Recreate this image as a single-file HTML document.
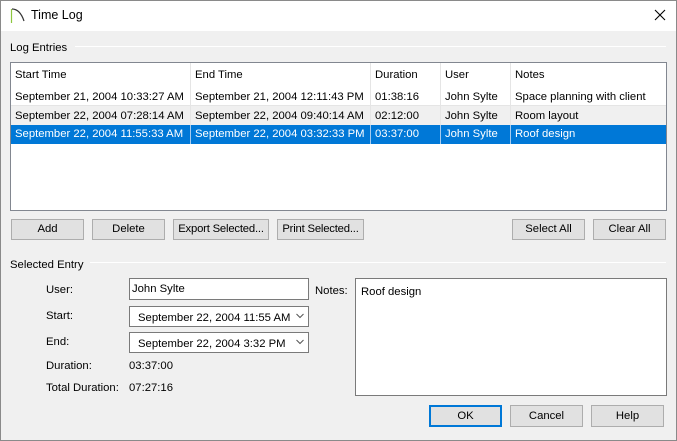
<!DOCTYPE html>
<html><head><style>
*{box-sizing:border-box;margin:0;padding:0}
body{width:677px;height:441px;position:relative;overflow:hidden;background:#f0f0f0;font-family:"Liberation Sans",sans-serif;font-size:11.3px;color:#000}
.a{position:absolute;white-space:nowrap}
.btn{position:absolute;height:21px;background:#e1e1e1;border:1px solid #adadad;text-align:center;line-height:19px;white-space:nowrap;overflow:hidden}
.line{position:absolute;height:1px;background:#a0a0a0;border-bottom:1px solid #fff}
.cell{position:absolute;height:18px;line-height:18px;padding-left:4px;white-space:nowrap}
.box{position:absolute;background:#fff;border:1px solid #7a7a7a;white-space:nowrap}
</style></head><body>
<div class="a" style="left:0;top:0;width:677px;height:441px;border:1px solid #8a8a8a"></div>
<div class="a" style="left:1px;top:1px;width:675px;height:30px;background:#fff"></div>
<svg class="a" style="left:10px;top:7px" width="18" height="18"><path d="M1.5 2 V16" stroke="#8dc63f" stroke-width="1.2"/><path d="M2 2 Q10 2 14 14" stroke="#333" fill="none" stroke-width="1.2"/></svg>
<div class="a" style="left:31px;top:8px;font-size:12.5px">Time Log</div>
<svg class="a" style="left:654px;top:9px" width="12" height="12"><path d="M1 1L11 11M11 1L1 11" stroke="#000" stroke-width="1.1"/></svg>

<div class="a" style="left:10px;top:42px">Log Entries</div>
<div class="line" style="left:75px;top:46px;width:591px"></div>
<div class="box" style="left:10px;top:62px;width:657px;height:149px;border-color:#828790">
 <div class="a" style="left:179px;top:0;width:1px;height:81px;background:#e5e5e5"></div>
 <div class="a" style="left:359px;top:0;width:1px;height:81px;background:#e5e5e5"></div>
 <div class="a" style="left:429px;top:0;width:1px;height:81px;background:#e5e5e5"></div>
 <div class="a" style="left:499px;top:0;width:1px;height:81px;background:#e5e5e5"></div>
 <div class="cell" style="left:0;top:3px">Start Time</div>
 <div class="cell" style="left:180px;top:3px">End Time</div>
 <div class="cell" style="left:360px;top:3px">Duration</div>
 <div class="cell" style="left:430px;top:3px">User</div>
 <div class="cell" style="left:500px;top:3px">Notes</div>
 <div class="a" style="left:0;top:25px;width:655px;height:18px;border-bottom:1px solid #e5e5e5"></div>
 <div class="cell" style="left:0;top:25px">September 21, 2004 10:33:27 AM</div>
 <div class="cell" style="left:180px;top:25px">September 21, 2004 12:11:43 PM</div>
 <div class="cell" style="left:360px;top:25px">01:38:16</div>
 <div class="cell" style="left:430px;top:25px">John Sylte</div>
 <div class="cell" style="left:500px;top:25px">Space planning with client</div>
 <div class="a" style="left:0;top:43px;width:655px;height:19px;background:#f0f0f0"></div>
 <div class="a" style="left:179px;top:43px;width:1px;height:19px;background:#e5e5e5"></div>
 <div class="a" style="left:359px;top:43px;width:1px;height:19px;background:#e5e5e5"></div>
 <div class="a" style="left:429px;top:43px;width:1px;height:19px;background:#e5e5e5"></div>
 <div class="a" style="left:499px;top:43px;width:1px;height:19px;background:#e5e5e5"></div>
 <div class="cell" style="left:0;top:44px">September 22, 2004 07:28:14 AM</div>
 <div class="cell" style="left:180px;top:44px">September 22, 2004 09:40:14 AM</div>
 <div class="cell" style="left:360px;top:44px">02:12:00</div>
 <div class="cell" style="left:430px;top:44px">John Sylte</div>
 <div class="cell" style="left:500px;top:44px">Room layout</div>
 <div class="a" style="left:0;top:62px;width:655px;height:19px;background:#0078d7"></div>
 <div class="a" style="left:179px;top:62px;width:1px;height:19px;background:#a6cbef"></div>
 <div class="a" style="left:359px;top:62px;width:1px;height:19px;background:#a6cbef"></div>
 <div class="a" style="left:429px;top:62px;width:1px;height:19px;background:#a6cbef"></div>
 <div class="a" style="left:499px;top:62px;width:1px;height:19px;background:#a6cbef"></div>
 <div class="cell" style="left:0;top:62px;color:#fff">September 22, 2004 11:55:33 AM</div>
 <div class="cell" style="left:180px;top:62px;color:#fff">September 22, 2004 03:32:33 PM</div>
 <div class="cell" style="left:360px;top:62px;color:#fff">03:37:00</div>
 <div class="cell" style="left:430px;top:62px;color:#fff">John Sylte</div>
 <div class="cell" style="left:500px;top:62px;color:#fff">Roof design</div>
</div>

<div class="btn" style="left:11px;top:219px;width:73px">Add</div>
<div class="btn" style="left:92px;top:219px;width:73px">Delete</div>
<div class="btn" style="left:173px;top:219px;width:96px;letter-spacing:-0.2px">Export Selected...</div>
<div class="btn" style="left:277px;top:219px;width:87px;letter-spacing:-0.2px">Print Selected...</div>
<div class="btn" style="left:512px;top:219px;width:73px">Select All</div>
<div class="btn" style="left:593px;top:219px;width:73px">Clear All</div>

<div class="a" style="left:10px;top:259px">Selected Entry</div>
<div class="line" style="left:90px;top:262px;width:576px"></div>

<div class="a" style="left:46px;top:284px">User:</div>
<div class="box" style="left:129px;top:278px;width:180px;height:22px;line-height:20px;padding-left:2px">John Sylte</div>
<div class="a" style="left:46px;top:310px">Start:</div>
<div class="box" style="left:129px;top:306px;width:180px;height:21px;line-height:22px;padding-left:8px">September 22, 2004 11:55 AM</div>
<div class="a" style="left:46px;top:336px">End:</div>
<div class="box" style="left:129px;top:332px;width:180px;height:21px;line-height:22px;padding-left:8px">September 22, 2004 3:32 PM</div>
<svg class="a" style="left:296px;top:313px" width="8" height="6"><path d="M0.5 1L4 4.5L7.5 1" stroke="#555" fill="none"/></svg>
<svg class="a" style="left:296px;top:339px" width="8" height="6"><path d="M0.5 1L4 4.5L7.5 1" stroke="#555" fill="none"/></svg>
<div class="a" style="left:46px;top:360px">Duration:</div>
<div class="a" style="left:129px;top:360px">03:37:00</div>
<div class="a" style="left:46px;top:382px">Total Duration:</div>
<div class="a" style="left:129px;top:382px">07:27:16</div>

<div class="a" style="left:315px;top:285px">Notes:</div>
<div class="box" style="left:355px;top:278px;width:312px;height:118px;padding:7px 0 0 5px">Roof design</div>

<div class="btn" style="left:429px;top:405px;width:73px;height:22px;border:2px solid #0078d7;line-height:18px">OK</div>
<div class="btn" style="left:510px;top:405px;width:73px;height:22px;line-height:20px">Cancel</div>
<div class="btn" style="left:591px;top:405px;width:73px;height:22px;line-height:20px">Help</div>
</body></html>
